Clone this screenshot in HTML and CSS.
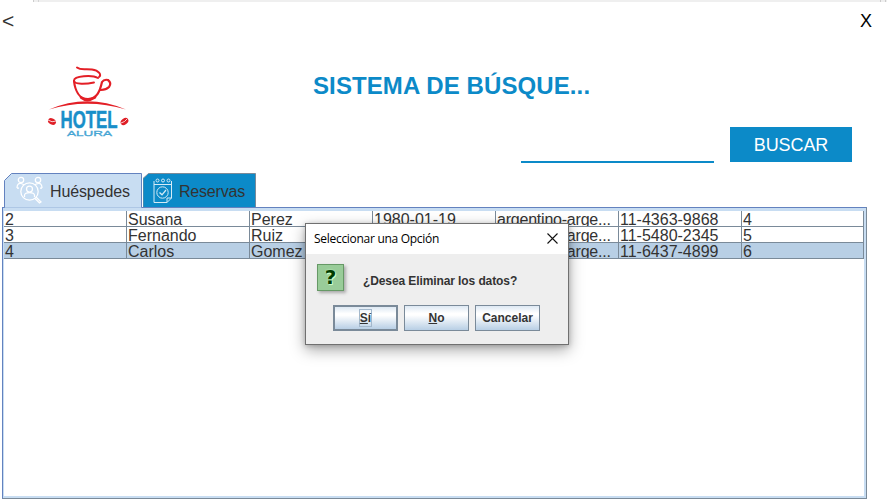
FILE: index.html
```html
<!DOCTYPE html>
<html lang="es">
<head>
<meta charset="utf-8">
<title>Sistema de búsqueda</title>
<link rel="stylesheet" href="styles.css">
</head>
<body>
<div class="window">
  <div class="strip"></div>
  <nav class="topbar"><span class="back">&lt;</span><span class="exit">X</span></nav>
  <header class="header">
    <svg class="logo" viewBox="0 0 100 85" width="100" height="85">
      <g fill="none" stroke="#e31f26" stroke-linecap="round">
        <path stroke-width="2" d="M37 7.500C41 10.500 45 8.500 52 9.500S62 15 59 17"/>
        <path stroke-width="1.900" d="M58 18C52 14.500 34 16 34 20.500S47 24 54 22.500"/>
        <path stroke-width="2.200" d="M34 21C35 30 39 39 48 39S60 31 62 22Q64 19 68 20Q72 23 69 27Q66 30 61 30"/>
        <path stroke-width="2.500" d="M41 37.500Q47 42.500 55 37.500"/>
      </g>
      <path fill="#e31f26" d="M9 49.500Q47 33 86 49.500Q47 38 9 49.500Z"/>
      <g fill="#df1f26">
        <ellipse cx="12" cy="61.500" rx="4.200" ry="3" transform="rotate(25 12 61.500)"/>
        <ellipse cx="84.500" cy="61.500" rx="4.200" ry="3" transform="rotate(-35 84.500 61.500)"/>
      </g>
      <path d="M8 60Q12 63 16 61M81 63Q85 62 87 59" fill="none" stroke="#fff" stroke-width=".8"/>
      <text x="20.500" y="67.500" fill="#198fc9" stroke="#198fc9" stroke-width=".5" font-family="Liberation Sans" font-weight="bold" font-size="23" textLength="57" lengthAdjust="spacingAndGlyphs">HOTEL</text>
      <text x="27" y="76" fill="#45a5d4" stroke="#45a5d4" stroke-width=".3" font-family="Liberation Sans" font-size="8" textLength="45" lengthAdjust="spacingAndGlyphs">ALURA</text>
    </svg>
    <h1 class="title">SISTEMA DE BÚSQUE...</h1>
    <div class="search"><div class="field"></div><div class="buscar">BUSCAR</div></div>
  </header>
  <div class="tabs">
    <div class="tab first">
      <svg class="shape" width="138" height="38" viewBox="0 0 138 38"><path d="M1 34.500H137.500V38H1Z" fill="#c8ddf2"/><path d="M.5 34.500V7.500L7.500.5H137.500V34.500" fill="#c8ddf2" stroke="#6382bf"/></svg>
      <svg class="icon people" width="28" height="28" viewBox="0 0 28 28" fill="none" stroke="#fff" stroke-width="1.250">
        <circle cx="5" cy="4" r="2.700"/><circle cx="22" cy="4" r="2.700"/>
        <path d="M1 12Q1 7 5 7.500Q7 8 8 9M19 9Q20 7.500 22 7.500Q26 7 26 12M3 12H1M24 12H26"/>
        <circle cx="13.500" cy="15.500" r="8.700"/><circle cx="13.500" cy="13" r="3"/><path d="M8.500 21V19Q9 16.500 13.500 16.500T18.500 19V21M20 21L25 26L23.500 27L19 22.500"/>
      </svg><span class="lbl">Huéspedes</span>
    </div>
    <div class="tab second">
      <svg class="shape" width="113" height="34" viewBox="0 0 113 34"><path d="M0 34V5.500L5.500.5H112.500V34" fill="#0c8ac8" stroke="#7a8a99"/></svg>
      <svg class="icon calendar" width="20" height="26" viewBox="0 0 20 26" fill="none" stroke="#d5ebf6">
        <path d="M1 3V24.500H14L18.500 20V3M1 6.500H18.500M14 24.500V20H18.500"/>
        <circle cx="4.500" cy="2.500" r="1.500"/><circle cx="10" cy="2.500" r="1.500"/><circle cx="15.500" cy="2.500" r="1.500"/>
        <circle cx="9.500" cy="14.500" r="5.700"/><path stroke-width="1.300" d="M6.500 14.500L9 16.800L13 12"/>
      </svg><span class="lbl">Reservas</span>
    </div>
  </div>
  <main class="pane">
    <div class="row"><span>2</span><span>Susana</span><span>Perez</span><span>1980-01-19</span><span class="tight">argentino-arge...</span><span>11-4363-9868</span><span>4</span></div>
    <div class="row"><span>3</span><span>Fernando</span><span>Ruiz</span><span></span><span class="tight">argentino-arge...</span><span>11-5480-2345</span><span>5</span></div>
    <div class="row selected"><span>4</span><span>Carlos</span><span>Gomez</span><span></span><span class="tight">argentino-arge...</span><span>11-6437-4899</span><span>6</span></div>
  </main>
  <section class="dialog">
    <div class="dialog-title"><span>Seleccionar una Opción</span>
      <svg width="11" height="11" viewBox="0 0 11 11"><path d="M.5 .5L10.500 10.500M10.500 .5L.5 10.500" stroke="#111" stroke-width="1.100"/></svg></div>
    <div class="message"><div class="question">?</div><p>¿Desea Eliminar los datos?</p></div>
    <div class="actions"><div class="btn default"><span class="focus"><u>S</u>í</span></div><div class="btn"><span><u>N</u>o</span></div><div class="btn"><span>Cancelar</span></div></div>
  </section>
</div>
</body>
</html>
```
FILE: styles.css
```css
* { box-sizing: border-box; }
body { margin: 0; background: #fff; font-family: "Liberation Sans", sans-serif; color: #333; }
.window { position: relative; width: 887px; height: 501px; overflow: hidden; display: flex; flex-direction: column; }
.strip { height: 2px; flex: none; margin-left: 33px; background: linear-gradient(90deg, #ccc 1px, #efefef 1px 5px, #d5d5d5 5px 6px, #efefef 6px 847px, #ccc 847px 848px, #efefef 848px 852px, #ccc 852px 853px, #efefef 853px); }
.topbar { height: 58px; flex: none; display: flex; justify-content: space-between; padding: 7px 15px 0 2px; font-size: 20px; line-height: 23px; }
.back { font-size: 21px; }
.exit { font-size: 18px; line-height: 25px; color: #000; }
.header { height: 113px; flex: none; display: flex; padding-left: 40px; }
.logo { flex: none; }
.title { width: 277px; margin: 12px 0 0 173px; font-size: 24px; line-height: 28px; font-weight: bold; letter-spacing: .1px; color: #0c8ac8; white-space: nowrap; }
.search { display: flex; align-items: flex-start; margin: 67px 0 0 -69px; }
.field { width: 193px; height: 36px; border-bottom: 2px solid #0c8ac8; }
.buscar { width: 122px; height: 35px; margin-left: 16px; background: #0c8ac8; color: #fff; font-size: 18px; line-height: 36px; letter-spacing: -.1px; text-align: center; }
.tabs { height: 34px; flex: none; display: flex; padding-left: 4px; z-index: 1; }
.tab { position: relative; display: flex; height: 36px; font-size: 16px; }
.first { width: 138px; padding-left: 12px; }
.second { width: 113px; margin-left: 1px; padding-left: 10px; }
.shape { position: absolute; left: 0; top: 0; }
.icon { position: relative; flex: none; }
.people { margin-top: 3px; }
.calendar { margin-top: 5px; }
.lbl { position: relative; margin: 9px 0 0 6px; line-height: 20px; letter-spacing: -.12px; }
.second .lbl { letter-spacing: -.2px; }
.pane { width: 865px; height: 292px; flex: none; margin-left: 2px; border: 1px solid #6382bf; border-right-color: #7a8a99; border-bottom-color: #7a8a99; box-shadow: inset -2px -2px #c8ddf2, inset 1px 3px #c8ddf2; padding: 3px 2px 2px 1px; }
.row { display: grid; grid-template-columns: repeat(6, 123px) 122px; width: 860px; height: 16px; }
.row span { height: 16px; padding-left: 1px; border-right: 1px solid #7a8a99; border-bottom: 1px solid #7a8a99; font-size: 16px; line-height: 17px; overflow: hidden; white-space: nowrap; }
.row .tight { letter-spacing: -.22px; }
.selected { background: #b8cfe5; }
.dialog { position: absolute; left: 305px; top: 223px; width: 264px; height: 122px; border: 1px solid #707070; background: #eee; box-shadow: 0 5px 14px rgba(0,0,0,.34), 0 1px 5px rgba(0,0,0,.2); font-size: 12px; font-weight: bold; }
.dialog-title { height: 30px; display: flex; align-items: center; justify-content: space-between; padding: 0 10px 2px 8px; background: #fff; color: #000; font: 12px "Open Sans", sans-serif; letter-spacing: -.29px; }
.message { height: 51px; display: flex; padding: 10px 0 0 11px; }
.question { width: 27px; height: 27px; border: 1px solid #669966; background: #9c9; box-shadow: 2px 2px 3px #aaa; color: #003c00; font: bold 20px/25px "DejaVu Sans", sans-serif; text-align: center; text-shadow: 0 0 2px #cfc, 1px 1px #cfc; }
.message p { margin: 10px 0 0 19px; line-height: 14px; letter-spacing: -.1px; white-space: nowrap; }
.actions { display: flex; gap: 6px; padding-left: 27px; }
.btn { width: 65px; height: 26px; display: flex; align-items: center; justify-content: center; border: 1px solid #7a8a99; background: linear-gradient(#dde8f3 0, #fff 30%, #fff 38%, #b8cfe5 100%); }
.default { border-width: 2px; }
.focus { border: 1px solid #a3b8cc; padding: 1px 0; }
.btn u { text-underline-offset: 1px; }
```
